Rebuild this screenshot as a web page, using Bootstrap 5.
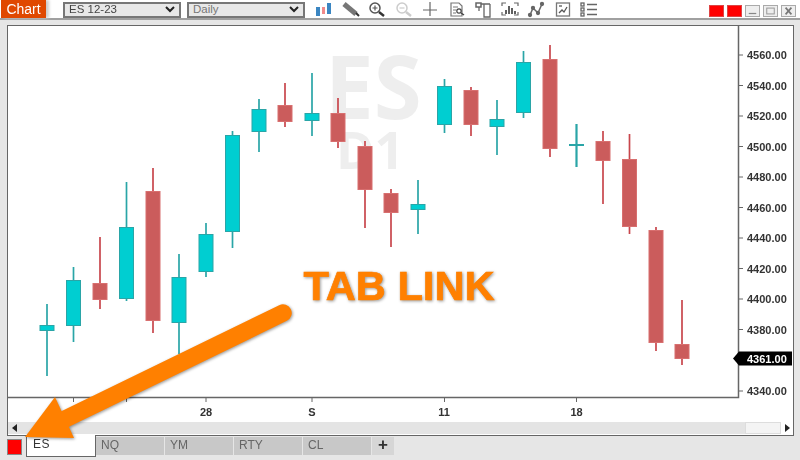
<!DOCTYPE html>
<html lang="en">
<head>
<meta charset="utf-8">
<title>Chart</title>
<link rel="stylesheet" href="https://cdn.jsdelivr.net/npm/bootstrap@5.3.0/dist/css/bootstrap.min.css">
<style>
html,body{width:800px;height:460px;overflow:hidden;background:#e6e6e6;}
body{font-family:"Liberation Sans",Arial,sans-serif;font-size:12px;}
.stage{width:800px;height:460px;filter:blur(.5px);}
.topbar{height:20px;background:#fff;border-bottom:2px solid #a0a0a0;padding-left:1px;}
.chart-tag{width:45px;height:18px;background:#e04800;color:#fff;font-size:14px;line-height:18px;text-align:center;box-shadow:3px 0 3px #ccc;}
.pick{height:16px;background:#e8e8e8;border:2px solid #777;color:#444;font-size:11.5px;padding:0 4px;margin-top:1px;}
.pick-a{width:118px;margin-left:17px;}
.pick-b{width:118px;margin-left:6px;color:#777;}
.tools{margin-left:10px;gap:8.5px;}
.tools svg{width:18px;height:18px;display:block;}
.winbtns{margin-left:auto;margin-right:4px;margin-top:4px;gap:3px;}
.wb{width:15px;height:12px;border:1px solid #aaa;background:#eee;display:block;}
.wb.on{background:#f00;border-color:#d44;}
.winframe{margin:4.5px 6px 0 7px;height:411px;border:1.5px solid #666;background:#fff;}
.canvas{display:block;width:784px;height:396px;}
.scroller{height:12px;background:#e4e4e4;}
.scroll-end{width:12px;background:#fff;}
.scroll-thumb{width:36px;background:#f4f4f4;border:1px solid #ddd;margin-left:auto;}
.tabrow{height:25px;padding-left:7px;}
.flag{width:15px;height:16px;background:#f00;border:1px solid #888;margin:3.500px 4px 0 0;}
.tabx{width:68px;height:18px;background:#c8c8c8;color:#666;font-size:12px;line-height:17px;padding-left:5px;margin-right:1px;margin-top:1px;}
.tabx.active{width:70px;height:22px;background:#fff;color:#333;letter-spacing:.5px;border:solid #666;border-width:0 1.5px 1.5px 1px;margin-top:-1px;margin-right:0;padding-left:6px;line-height:19px;}
.tabx.plus{width:22px;background:#d6d6d6;color:#333;font-size:17px;font-weight:700;padding:0;text-align:center;line-height:15px;}
.overlay{left:0;top:0;width:800px;height:460px;pointer-events:none;filter:drop-shadow(1px 1.5px 1.5px rgba(0,0,0,.4));}
.overlay text{font:700 41.5px "Liberation Sans",Arial,sans-serif;fill:#ff8000;stroke:#ff8000;stroke-width:.7;}
.up rect{fill:#00ced1;stroke:#2aa5a7;}
.up path{stroke:#2aa5a7;}
.dn rect{fill:#cb5c5c;stroke:#d86f6f;}
.dn path{stroke:#c8464c;}
.up path,.dn path{stroke-width:1.7;fill:none;}
.up path.doji{stroke-width:2.2;}
.axis{font:700 11px "Liberation Sans",Arial,sans-serif;fill:#333;}
.wm{font-family:"Open Sans",sans-serif;font-weight:700;fill:#eee;}
</style>
</head>
<body>
<div class="stage position-relative">
  <div class="topbar d-flex align-items-center">
    <div class="chart-tag">Chart</div>
    <div class="pick pick-a d-flex align-items-center justify-content-between"><span>ES 12-23</span><svg width="10" height="7" viewBox="0 0 10 7"><path d="M1 1l4 4 4-4" fill="none" stroke="#222" stroke-width="2"/></svg></div>
    <div class="pick pick-b d-flex align-items-center justify-content-between"><span>Daily</span><svg width="10" height="7" viewBox="0 0 10 7"><path d="M1 1l4 4 4-4" fill="none" stroke="#222" stroke-width="2"/></svg></div>
    <div class="tools d-flex align-items-center">
      <svg viewBox="0 0 18 18"><rect x="1" y="7" width="4" height="9" fill="#3b86c2"/><rect x="7" y="7" width="3" height="7" fill="#f08a8a"/><rect x="12" y="3" width="4" height="11" fill="#3b86c2"/></svg>
      <svg viewBox="0 0 18 18"><path d="M2 4l12 10" stroke="#777" stroke-width="5"/><path d="M14 13l3 3" stroke="#333" stroke-width="2"/></svg>
      <svg viewBox="0 0 18 18" fill="none" stroke="#555"><circle cx="7" cy="8" r="5" stroke-width="1.5"/><path d="M4.5 8h5M7 5.5v5" stroke-width="1.2"/><path d="M11 12l5 4" stroke="#333" stroke-width="2.4"/></svg>
      <svg viewBox="0 0 18 18" fill="none" stroke="#ccc"><circle cx="7" cy="8" r="5" stroke-width="1.5"/><path d="M4.5 8h5" stroke-width="1.2"/><path d="M11 12l5 4" stroke-width="2.4"/></svg>
      <svg viewBox="0 0 18 18" fill="none" stroke="#666" stroke-width="1.2"><path d="M9 2v14M2 10h14"/></svg>
      <svg viewBox="0 0 18 18" fill="none" stroke="#777" stroke-width="1.2"><path d="M3 3h8l3 3v10H3z"/><path d="M5 7h5M5 10h3M5 13h3"/><circle cx="11" cy="11" r="2.2" stroke="#444"/><path d="M13 13l3 2" stroke="#444" stroke-width="1.5"/></svg>
      <svg viewBox="0 0 18 18" fill="none" stroke="#666" stroke-width="1.3"><path d="M7 4h9M10 4v13h6V4"/><rect x="2" y="3" width="5" height="4" stroke-width="1.5"/><path d="M5 7v4"/></svg>
      <svg viewBox="0 0 18 18" fill="none" stroke="#666" stroke-width="1.2"><path d="M1 6V3h4M13 3h4v3M1 12v3h4M13 15h4v-3"/><path d="M5 14v-4M8 14V6M11 14V8M14 14v-3" stroke="#444" stroke-width="1.7"/></svg>
      <svg viewBox="0 0 18 18" fill="none" stroke="#666" stroke-width="1.5"><path d="M3 15l3-7 5 5 4-9"/><circle cx="3" cy="15" r="1.4" fill="#666"/><circle cx="6" cy="8" r="1.4" fill="#666"/><circle cx="11" cy="13" r="1.4" fill="#666"/><circle cx="15" cy="4" r="1.4" fill="#666"/></svg>
      <svg viewBox="0 0 18 18" fill="none" stroke="#777" stroke-width="1.3"><rect x="2.5" y="3" width="13" height="13"/><path d="M5 13l3-3 2 2 3-5" stroke="#555"/><path d="M5 6h3" stroke="#555"/></svg>
      <svg viewBox="0 0 18 18" fill="none" stroke="#666" stroke-width="1.3"><rect x="1" y="3" width="3" height="3"/><rect x="1" y="8" width="3" height="3"/><rect x="1" y="13" width="3" height="3"/><path d="M7 4.500h10M7 9.500h10M7 14.500h10"/></svg>
    </div>
    <div class="winbtns d-flex align-items-center">
      <span class="wb on"></span><span class="wb on"></span>
      <svg class="wb" viewBox="0 0 15 12"><path d="M3 9h9" stroke="#888" stroke-width="1.5"/></svg>
      <svg class="wb" viewBox="0 0 15 12"><rect x="3" y="2.500" width="9" height="7" fill="none" stroke="#999" stroke-width="1.2"/></svg>
      <svg class="wb" viewBox="0 0 15 12"><path d="M4 2l7 8M11 2l-7 8" stroke="#777" stroke-width="2"/></svg>
    </div>
  </div>

  <div class="winframe">
    <svg class="canvas" viewBox="8 26 784 396">
      <text class="wm" x="325" y="119" font-size="87">ES</text>
      <text class="wm" x="336" y="169" font-size="52">D1</text>
      <g class="up"><path d="M47 304V376"/><rect x="40" y="325.500" width="14" height="5"/></g>
      <g class="up"><path d="M73.500 267V342"/><rect x="66.500" y="280.500" width="14" height="45"/></g>
      <g class="dn"><path d="M100 237V309"/><rect x="93" y="283.500" width="14" height="16"/></g>
      <g class="up"><path d="M126.500 182V301"/><rect x="119.500" y="227.500" width="14" height="71"/></g>
      <g class="dn"><path d="M153 168V333"/><rect x="146" y="191.500" width="14" height="129"/></g>
      <g class="up"><path d="M179 254V354"/><rect x="172" y="277.500" width="14" height="45"/></g>
      <g class="up"><path d="M206 223V277"/><rect x="199" y="234.500" width="14" height="37"/></g>
      <g class="up"><path d="M232.500 131V248"/><rect x="225.500" y="135.500" width="14" height="96"/></g>
      <g class="up"><path d="M259 99V152"/><rect x="252" y="109.500" width="14" height="22"/></g>
      <g class="dn"><path d="M285 83V127"/><rect x="278" y="105.500" width="14" height="16"/></g>
      <g class="up"><path d="M312 73V136"/><rect x="305" y="113.500" width="14" height="7"/></g>
      <g class="dn"><path d="M338 98V148"/><rect x="331" y="113.500" width="14" height="28"/></g>
      <g class="dn"><path d="M365 141V228"/><rect x="358" y="146.500" width="14" height="43"/></g>
      <g class="dn"><path d="M391 189V247"/><rect x="384" y="193.500" width="14" height="19"/></g>
      <g class="up"><path d="M418 180V234"/><rect x="411" y="204.500" width="14" height="5"/></g>
      <g class="up"><path d="M444.500 79V133"/><rect x="437.500" y="86.500" width="14" height="38"/></g>
      <g class="dn"><path d="M471 87V136"/><rect x="464" y="90.500" width="14" height="34"/></g>
      <g class="up"><path d="M497 100V155"/><rect x="490" y="119.500" width="14" height="7"/></g>
      <g class="up"><path d="M523.500 51V118"/><rect x="516.500" y="62.500" width="14" height="50"/></g>
      <g class="dn"><path d="M550 45V157"/><rect x="543" y="59.500" width="14" height="89"/></g>
      <g class="up"><path class="doji" d="M576.500 124V167M569 145H584"/></g>
      <g class="dn"><path d="M603 131V204"/><rect x="596" y="141.500" width="14" height="19"/></g>
      <g class="dn"><path d="M629.500 134V234"/><rect x="622.500" y="159.500" width="14" height="67"/></g>
      <g class="dn"><path d="M656 227V351"/><rect x="649" y="230.500" width="14" height="112"/></g>
      <g class="dn"><path d="M682 300V365"/><rect x="675" y="344.500" width="14" height="14"/></g>

      <path d="M738.500 26V397.500H8" fill="none" stroke="#666" stroke-width="1.5"/>
      <path d="M739 55h4M739 85.500h4M739 116h4M739 146.500h4M739 177h4M739 207.500h4M739 238h4M739 268.500h4M739 299h4M739 329.500h4M739 360h4M739 391h4" stroke="#666"/>
      <path d="M73.500 398v4M126.500 398v4M206 398v4M312 398v4M444.500 398v4M576.500 398v4" stroke="#666"/>
      <g class="axis">
        <text x="747" y="59">4560.00</text><text x="747" y="89.500">4540.00</text><text x="747" y="120">4520.00</text><text x="747" y="150.500">4500.00</text><text x="747" y="181">4480.00</text><text x="747" y="211.500">4460.00</text><text x="747" y="242">4440.00</text><text x="747" y="272.500">4420.00</text><text x="747" y="303">4400.00</text><text x="747" y="333.500">4380.00</text><text x="747" y="395">4340.00</text>
        <text x="206" y="416" text-anchor="middle">28</text><text x="312" y="416" text-anchor="middle">S</text><text x="444" y="416" text-anchor="middle">11</text><text x="576.500" y="416" text-anchor="middle">18</text>
      </g>
      <path d="M733 358.500l6-7h53v14h-53z" fill="#000"/>
      <text class="axis" x="747" y="362.500" style="fill:#fff">4361.00</text>
    </svg>
    <div class="scroller d-flex justify-content-between">
      <div class="d-flex align-items-center ps-1"><svg width="6" height="8" viewBox="0 0 6 8"><path d="M5 0v8L0 4z" fill="#222"/></svg></div>
      <div class="scroll-thumb"></div>
      <div class="scroll-end d-flex align-items-center justify-content-center"><svg width="6" height="8" viewBox="0 0 6 8"><path d="M1 0v8l5-4z" fill="#222"/></svg></div>
    </div>
  </div>

  <div class="tabrow d-flex align-items-start">
    <div class="flag"></div>
    <div class="tabx active">ES</div>
    <div class="tabx">NQ</div>
    <div class="tabx">YM</div>
    <div class="tabx">RTY</div>
    <div class="tabx">CL</div>
    <div class="tabx plus">+</div>
  </div>

  <svg class="overlay position-absolute" viewBox="0 0 800 460">
    <text x="303.500" y="300" textLength="191" lengthAdjust="spacingAndGlyphs">TAB LINK</text>
    <path d="M283 313L60 421.500" fill="none" stroke="#ff8000" stroke-width="17.5" stroke-linecap="round"/>
    <path d="M25 437L55 397L74 438Z" fill="#ff8000"/>
  </svg>
</div>
<script src="https://cdn.jsdelivr.net/npm/bootstrap@5.3.0/dist/js/bootstrap.bundle.min.js"></script>
</body>
</html>
